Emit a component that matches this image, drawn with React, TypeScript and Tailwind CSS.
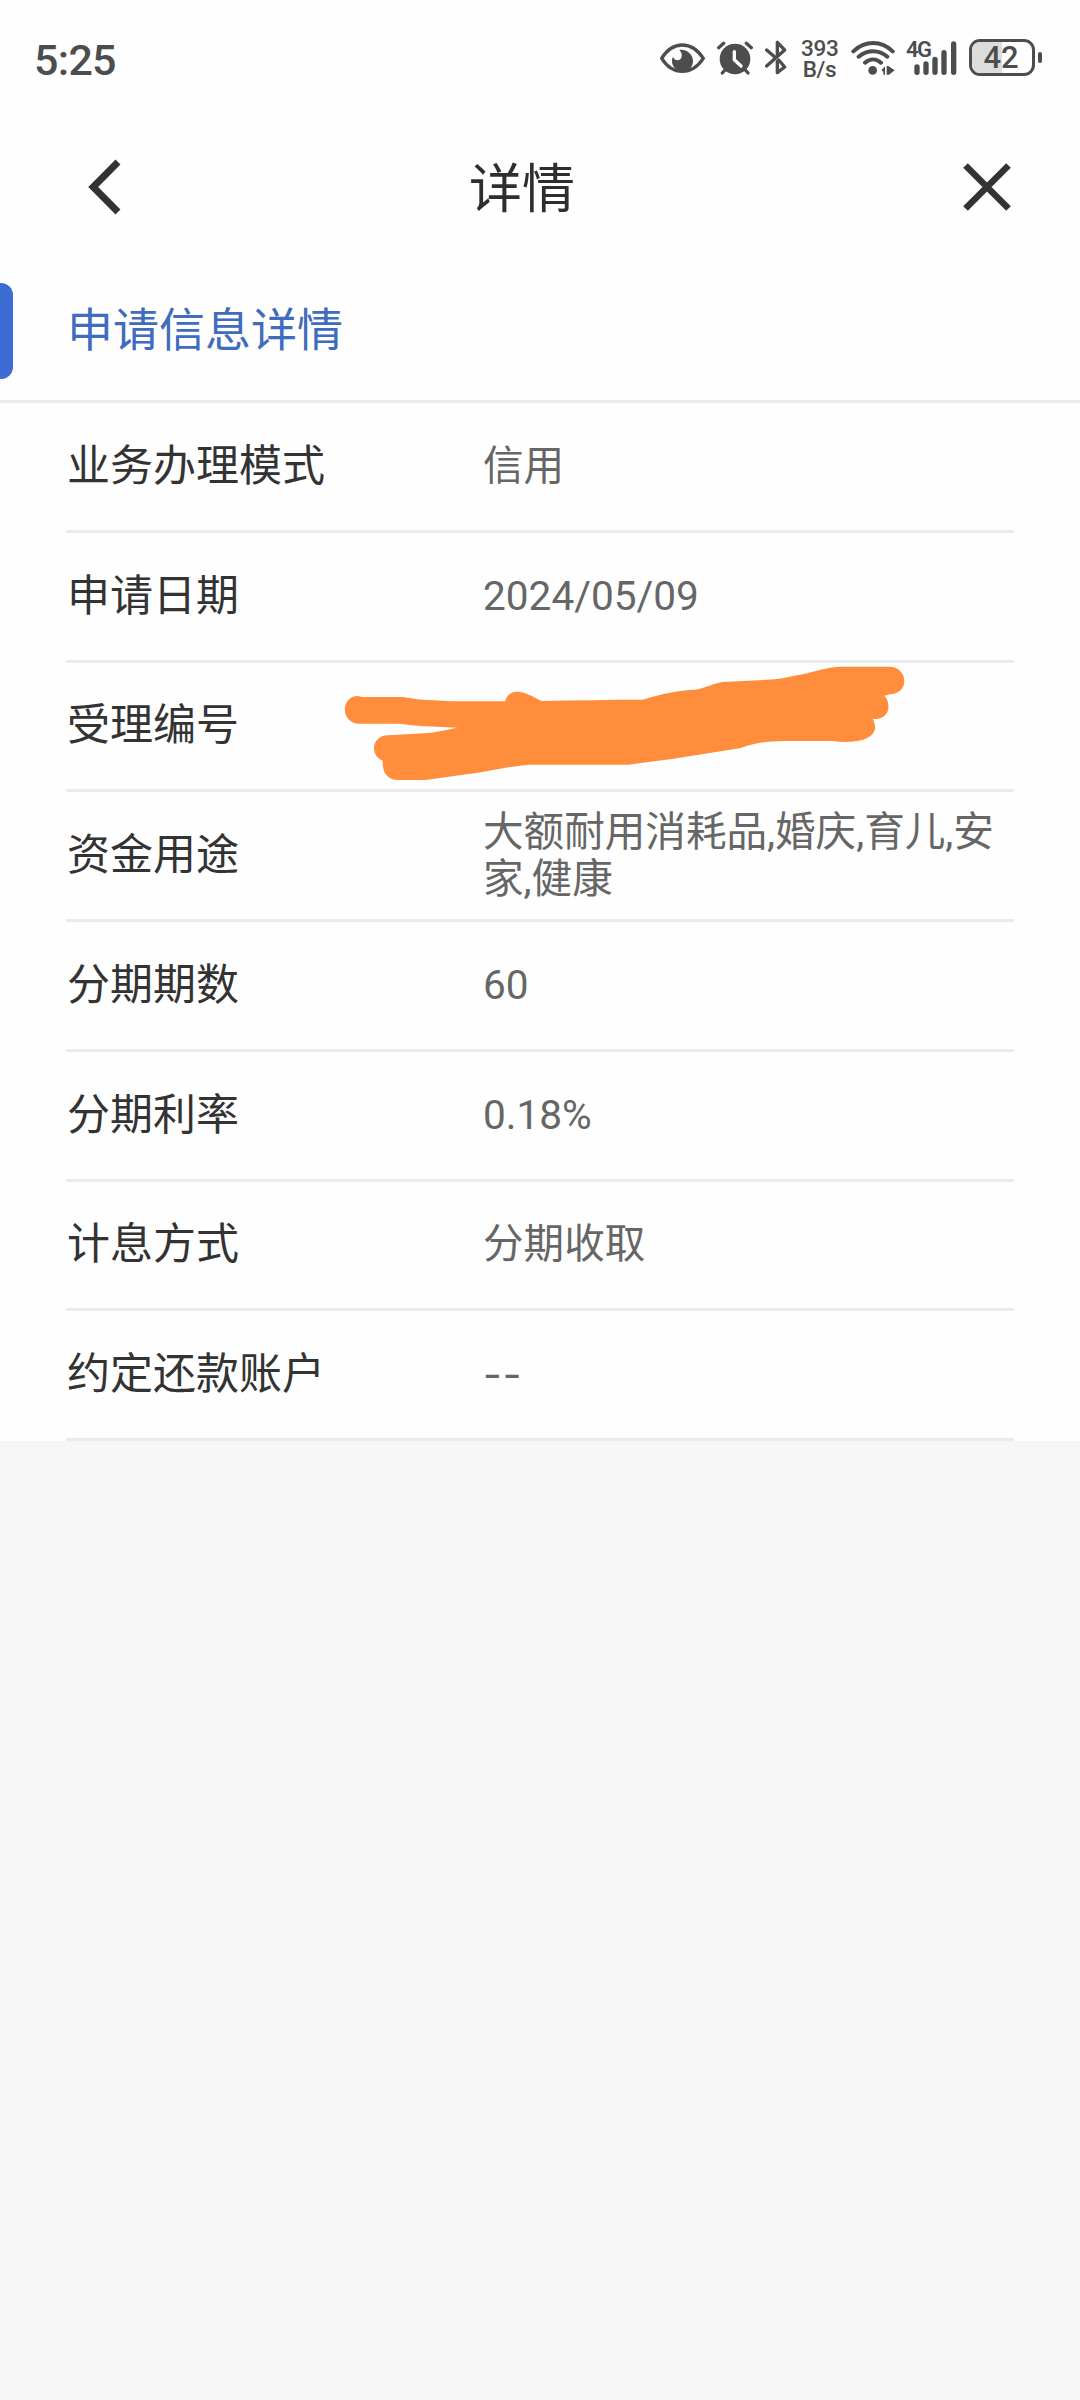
import type { ReactNode } from 'react';

interface DetailItem {
    label: string;
    value?: string;
    masked?: boolean;
}

const details: DetailItem[] = [
    { label: '业务办理模式', value: '信用' },
    { label: '申请日期', value: '2024/05/09' },
    { label: '受理编号', masked: true },
    { label: '资金用途', value: '大额耐用消耗品,婚庆,育儿,安家,健康' },
    { label: '分期期数', value: '60' },
    { label: '分期利率', value: '0.18%' },
    { label: '计息方式', value: '分期收取' },
    { label: '约定还款账户' },
];

function EyeIcon() {
    return (
        <svg className="h-[30px] w-[45px]" viewBox="0 0 135 90" fill="none">
            <path d="M5 46C20 22 42 6 67 6s47 16 63 40C114 70 92 85 67 85S20 70 5 46Z" stroke="#4d4d4d" strokeWidth="10" strokeLinejoin="round" />
            <path d="M58 21C76 17 99 32 99 54c0 18-14 31-31 31-18 0-32-14-32-30 0-6 1-10 3-14 3 9 11 12 18 10 10-4 12-18 1-30Z" fill="#4d4d4d" />
        </svg>
    );
}

function AlarmIcon() {
    return (
        <svg className="h-[34px] w-9" viewBox="0 0 108 102">
            <circle cx="54" cy="54" r="46" fill="#4d4d4d" />
            <path d="M5 20 20 7M103 20 88 7M16 96l8-9M93 96l-8-9" stroke="#4d4d4d" strokeWidth="10" strokeLinecap="round" />
            <path d="M52 32v24l20 19" fill="none" stroke="#fefefe" strokeWidth="10" strokeLinecap="round" strokeLinejoin="round" />
        </svg>
    );
}

function BluetoothIcon() {
    return (
        <svg className="h-[35px] w-[22px]" viewBox="0 0 66 105" fill="none">
            <path d="m5 30 27 23M5 78l54-48L37 7v38M37 64v34l22-17-18-21" stroke="#4d4d4d" strokeWidth="10" strokeLinecap="round" strokeLinejoin="round" />
        </svg>
    );
}

function WifiIcon() {
    return (
        <svg className="h-[34px] w-11" viewBox="0 0 132 102" fill="none">
            <path d="M7 31C42-2 91-2 125 31M23 47c26-22 61-22 86 0M42 65c15-13 34-13 48 0" stroke="#4d4d4d" strokeWidth="12" strokeLinecap="round" />
            <circle cx="65" cy="88" r="13" fill="#4d4d4d" />
            <path d="M91 88 102 76v25h-5V92ZM107 75h5l19 13-17 13h-7Z" fill="#4d4d4d" />
        </svg>
    );
}

function SignalIcon() {
    return (
        <div className="relative h-[34px] w-[51px]">
            <svg className="h-[34px] w-[51px]" viewBox="0 0 153 102" fill="none">
                <path d="M33 78v16M60 69v25M87 55v39M114 35v59M143 9v85" stroke="#4d4d4d" strokeWidth="16" strokeLinecap="round" />
            </svg>
            <span className="absolute -top-[3px] left-0 text-[22px] leading-6 font-semibold tracking-[-1.5px]">4G</span>
        </div>
    );
}

function Battery({ level }: { level: number }) {
    return (
        <div className="flex items-center gap-[3px]">
            <div className="relative flex h-[37px] w-[66px] items-center justify-center rounded-[11px] border-[3px] border-[#4d4d4d]">
                <div className="absolute inset-y-0 left-0 rounded-l-[8px] bg-[#dcdcdc]" style={{ width: `${level + 8}%` }} />
                <span className="relative pr-0.5 text-[31px] leading-[37px] font-medium">{level}</span>
            </div>
            <div className="h-[11px] w-1 rounded-sm bg-[#4d4d4d]" />
        </div>
    );
}

function StatusBar() {
    return (
        <div className="flex h-[115px] items-center justify-between pr-[38px] pl-[34px] text-[#4d4d4d]">
            <span className="pt-[5px] text-[43px] leading-none font-medium tracking-[-0.7px]">5:25</span>
            <div className="flex items-center">
                <EyeIcon />
                <div className="ml-3"><AlarmIcon /></div>
                <div className="ml-3"><BluetoothIcon /></div>
                <div className="ml-[14px] w-[37px] pt-0.5 text-center text-[22.5px] leading-[21px] font-medium tracking-[-0.3px]">
                    393
                    <br />
                    B/s
                </div>
                <div className="ml-[13px]"><WifiIcon /></div>
                <div className="ml-[11px]"><SignalIcon /></div>
                <div className="ml-3"><Battery level={42} /></div>
            </div>
        </div>
    );
}

function Header() {
    return (
        <div className="flex h-[144px] items-center">
            <button className="w-[132px] pl-[88px]">
                <svg className="h-14 w-[34px]" viewBox="0 0 34 56" fill="none">
                    <path d="M30 3 5.2 28 30 53" stroke="#333" strokeWidth="7" />
                </svg>
            </button>
            <h1 className="flex-1 pt-1.5 pl-0.5 text-center text-[53px] leading-none text-[#2e2e2e]">详情</h1>
            <button className="w-[170px] pl-[53px]">
                <svg className="h-12 w-12" viewBox="0 0 48 48" fill="none">
                    <path d="m2.5 2.5 43 43M45.5 2.5l-43 43" stroke="#333" strokeWidth="6.5" />
                </svg>
            </button>
        </div>
    );
}

function MaskStroke() {
    return (
        <svg className="absolute top-[2.5px] left-[277.7px] h-[117px] w-[561.5px]" viewBox="60 75 1420 351" preserveAspectRatio="none">
            <path
                fill="#ff8d3b"
                d="M95 168C76 168 62 186 62 209C62 232 78 251 98 251H200C218 254 240 257 270 259L345 263C320 270 292 277 265 280L170 286C150 286 136 304 136 325C136 342 144 356 158 362C156 400 172 420 197 420H265C310 413 350 406 390 400C440 390 480 379 528 374H780C815 369 850 363 885 358L1060 325C1085 315 1110 304 1170 303H1297C1350 312 1403 300 1403 262C1403 253 1401 245 1397 237H1407C1425 235 1437 219 1437 200C1437 185 1433 175 1427 167L1440 163C1462 162 1477 146 1477 123C1477 98 1460 80 1440 80H1320C1285 80 1250 95 1220 103C1195 107 1175 116 1150 118L1018 126C995 130 975 144 948 149C905 150 860 163 815 179C730 179 645 181 560 183C538 171 520 155 498 155C482 155 471 167 468 184H330C300 182 270 181 245 178C225 174 215 171 205 171H105Z"
            />
        </svg>
    );
}

function DetailRow({ label, children }: { label: string; children: ReactNode }) {
    return (
        <div className="relative flex h-[129.75px] items-center border-b-[3px] border-[#ebebeb]">
            <div className="w-[417px] pl-px text-[43px] leading-none text-[#333]">{label}</div>
            <div className="flex-1 text-[40.6px] leading-[47px] text-[#666]">{children}</div>
        </div>
    );
}

export default function App() {
    return (
        <div className="min-h-[2400px] w-[1080px] bg-[#f6f6f6] font-[Roboto,'Noto_Sans_CJK_SC',sans-serif]">
            <div className="bg-[#fefefe]">
                <StatusBar />
                <Header />
                <div className="flex h-36 items-center border-b-[3px] border-[#ebebeb]">
                    <div className="mt-[3px] h-24 w-[13px] rounded-r-xl bg-[#3d6dd3]" />
                    <h2 className="pl-[54px] text-[46px] leading-none text-[#3f6cbd]">申请信息详情</h2>
                </div>
                <div className="px-[66px]">
                    {details.map(item => (
                        <DetailRow key={item.label} label={item.label}>
                            {item.masked ? <MaskStroke /> : item.value ?? <span className="font-[Inter,sans-serif] tracking-[1px]">--</span>}
                        </DetailRow>
                    ))}
                </div>
            </div>
        </div>
    );
}
